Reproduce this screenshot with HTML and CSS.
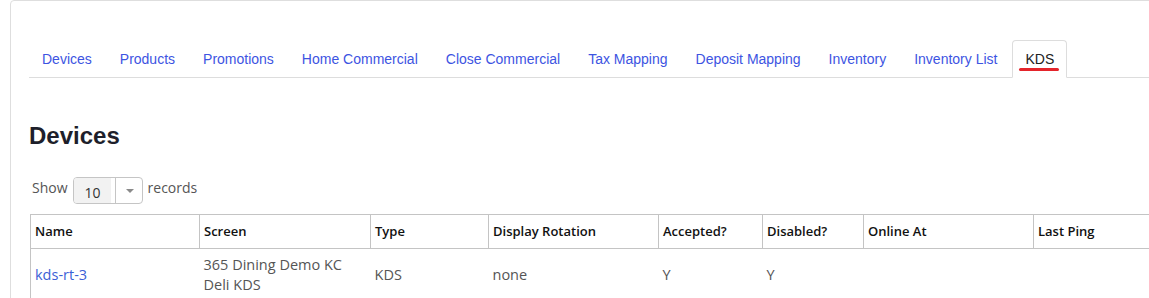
FILE: index.html
```html
<!DOCTYPE html>
<html>
<head>
    <title>Devices</title>
    <meta charset="UTF-8">
    <link rel="stylesheet" href="styles.css">
</head>
<body>
    <div class="panel">
        <ul class="tabs">
            <li class="tab"><a href="#">Devices</a></li>
            <li class="tab"><a href="#">Products</a></li>
            <li class="tab"><a href="#">Promotions</a></li>
            <li class="tab"><a href="#">Home Commercial</a></li>
            <li class="tab"><a href="#">Close Commercial</a></li>
            <li class="tab"><a href="#">Tax Mapping</a></li>
            <li class="tab"><a href="#">Deposit Mapping</a></li>
            <li class="tab"><a href="#">Inventory</a></li>
            <li class="tab"><a href="#">Inventory List</a></li>
            <li class="tab active"><a href="#">KDS</a></li>
        </ul>

        <h1>Devices</h1>

        <div class="length">
            <span class="label">Show</span>
            <div class="select">
                <span class="select-value">10</span>
                <span class="select-arrow"></span>
            </div>
            <span class="label">records</span>
        </div>

        <table class="devices">
            <colgroup>
                <col class="c-name">
                <col class="c-screen">
                <col class="c-type">
                <col class="c-rotation">
                <col class="c-accepted">
                <col class="c-disabled">
                <col class="c-online">
                <col class="c-ping">
            </colgroup>
            <thead>
                <tr>
                    <th>Name</th>
                    <th>Screen</th>
                    <th>Type</th>
                    <th>Display Rotation</th>
                    <th>Accepted?</th>
                    <th>Disabled?</th>
                    <th>Online At</th>
                    <th>Last Ping</th>
                </tr>
            </thead>
            <tbody>
                <tr>
                    <td><a href="#">kds-rt-3</a></td>
                    <td>365 Dining Demo KC Deli KDS</td>
                    <td>KDS</td>
                    <td>none</td>
                    <td>Y</td>
                    <td>Y</td>
                    <td></td>
                    <td></td>
                </tr>
            </tbody>
        </table>
    </div>
</body>
</html>
```

FILE: styles.css
```css
body {
    margin: 0;
    overflow: hidden;
    background-color: #fff;
    font-family: "Open Sans", "Noto Sans", sans-serif;
    color: #555;
}
.panel {
    margin-left: 10px;
    width: 1300px;
    min-height: 400px;
    padding: 39px 18px 0;
    border: 1px solid #dedede;
    border-radius: 4px;
}
.tabs {
    display: flex;
    list-style: none;
    margin: 0;
    padding: 0;
    border-bottom: 1px solid #dddddd;
    font-family: "Liberation Sans", Arial, sans-serif;
    font-size: 14px;
}
.tab {
    margin-bottom: -1px;
}
.tab a {
    display: block;
    position: relative;
    margin-right: 2px;
    padding: 8px 12px;
    line-height: 20px;
    border: 1px solid transparent;
    border-radius: 4px 4px 0 0;
    color: #3d54e2;
    text-decoration: none;
}
.tab.active a {
    border-color: #dddddd #dddddd transparent;
    background-color: #fff;
    color: #222;
}
.tab.active a::after {
    content: "";
    position: absolute;
    left: 6px;
    top: 27px;
    width: 40px;
    height: 3px;
    border-radius: 2px;
    background-color: #e4242b;
}
h1 {
    margin: 45px 0 0;
    font-family: "Liberation Sans", Arial, sans-serif;
    font-size: 24px;
    line-height: 26px;
    font-weight: bold;
    color: #1e1f2b;
}
.length {
    display: flex;
    align-items: flex-start;
    gap: 5px;
    margin: 28px 0 0 3px;
    font-size: 14px;
}
.label {
    margin-top: 1px;
    line-height: 20px;
    color: #555;
}
.select {
    display: flex;
    height: 25px;
    border: 1px solid #c5c5c5;
    border-radius: 4px;
    overflow: hidden;
}
.select-value {
    width: 26px;
    margin-right: 4px;
    padding: 5px 0 0 11px;
    line-height: 20px;
    background-color: #f2f2f2;
    color: #333;
}
.select-arrow {
    position: relative;
    width: 26px;
    border-left: 1px solid #c5c5c5;
}
.select-arrow::after {
    content: "";
    position: absolute;
    left: 10px;
    top: 11px;
    border-left: 4px solid transparent;
    border-right: 4px solid transparent;
    border-top: 4px solid #8a8a8a;
}
.devices {
    margin: 10px 0 0 1px;
    border-collapse: collapse;
    table-layout: fixed;
    width: 1200px;
}
.c-name { width: 169px; }
.c-screen { width: 171px; }
.c-type { width: 118px; }
.c-rotation { width: 170px; }
.c-accepted { width: 104px; }
.c-disabled { width: 101px; }
.c-online { width: 170px; }
.c-ping { width: 197px; }
.devices th {
    padding: 7px 4px;
    line-height: 19px;
    border: 1px solid #c4c4c4;
    text-align: left;
    font-size: 13px;
    font-weight: 600;
    color: #111;
}
.devices td {
    padding: 6px 4px;
    line-height: 20px;
    vertical-align: middle;
    font-size: 14.5px;
    color: #555;
}
.devices td:first-child {
    border-left: 1px solid #c4c4c4;
}
.devices td a {
    color: #3b5fd6;
    text-decoration: none;
}
```
